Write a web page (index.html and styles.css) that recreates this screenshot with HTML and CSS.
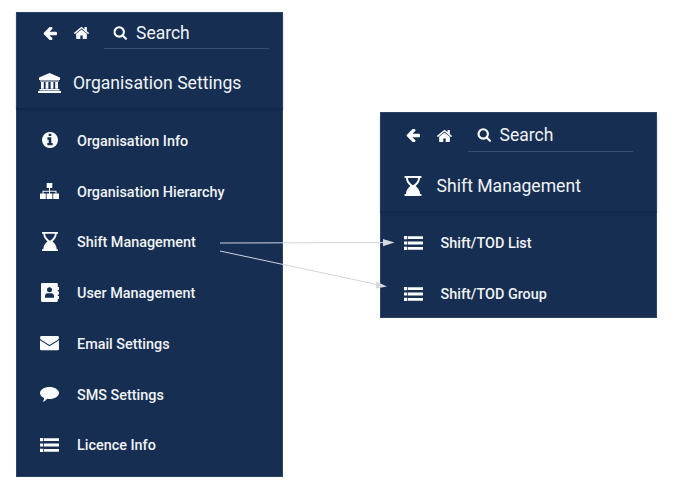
FILE: index.html
```html
<!DOCTYPE html>
<html lang="en">
<head>
<meta charset="utf-8">
<title>Organisation Settings</title>
<link rel="stylesheet" href="styles.css">
</head>
<body>
<svg class="defs" aria-hidden="true">
  <symbol id="i-back" viewBox="128 256 1536 1408"><path d="M1664 896v128q0 53-32.500 90.500t-84.500 37.500h-704l293 294q38 36 38 90t-38 90l-75 76q-37 37-90 37-52 0-91-37l-651-652q-37-37-37-90 0-52 37-91l651-650q38-38 91-38 52 0 90 38l75 74q38 38 38 91t-38 91l-293 293h704q52 0 84.500 37.500t32.500 90.500z"/></symbol>
  <symbol id="i-home" viewBox="90 256 1612 1280"><path d="M1472 992v480q0 26-19 45t-45 19h-384v-384h-256v384h-384q-26 0-45-19t-19-45v-480q0-1 .5-3t.5-3l575-474 575 474q1 2 1 6zm223-69l-62 74q-8 9-21 11h-3q-13 0-21-7l-692-577-692 577q-12 8-24 7-13-2-21-11l-62-74q-8-10-7-23.500t11-21.500l719-599q32-26 76-26t76 26l244 204v-195q0-14 9-23t23-9h192q14 0 23 9t9 23v408l219 182q10 8 11 21.500t-7 23.500z"/></symbol>
  <symbol id="i-search" viewBox="0 128 1728 1664"><path d="M1216 832q0-185-131.500-316.500t-316.500-131.500-316.500 131.500-131.500 316.500 131.500 316.500 316.500 131.500 316.500-131.500 131.500-316.500zm512 832q0 52-38 90t-90 38q-54 0-90-38l-343-342q-179 124-399 124-143 0-273.500-55.500t-225-150-150-225-55.500-273.500 55.500-273.500 150-225 225-150 273.500-55.500 273.500 55.500 225 150 150 225 55.500 273.500q0 220-124 399l343 343q37 37 37 90z"/></symbol>
  <symbol id="i-info" viewBox="128 128 1536 1536"><path d="M1152 1376v-160q0-14-9-23t-23-9h-96v-512q0-14-9-23t-23-9h-320q-14 0-23 9t-9 23v160q0 14 9 23t23 9h96v320h-96q-14 0-23 9t-9 23v160q0 14 9 23t23 9h448q14 0 23-9t9-23zm-128-896v-160q0-14-9-23t-23-9h-192q-14 0-23 9t-9 23v160q0 14 9 23t23 9h192q14 0 23-9t9-23zm640 416q0 209-103 385.500t-279.500 279.500-385.500 103-385.500-103-279.500-279.500-103-385.500 103-385.500 279.500-279.500 385.500-103 385.500 103 279.500 279.500 103 385.500z"/></symbol>
  <symbol id="i-bank" viewBox="0 0 23 20"><path d="M11.500 0 22 4.500V7H1V4.500zM2 7.600h19v1H2zM3 9h2.800v6.800H3zM7.600 9h2.800v6.800H7.600zM12.600 9h2.800v6.800h-2.800zM17.200 9H20v6.800h-2.800zM1.500 16h20v1.500h-20zM0 18h23v2H0z"/></symbol>
  <symbol id="i-tree" viewBox="0 0 19 16"><path d="M6.700 0h5.600v5H6.700zM9 5h1v2.800h6.500V11h-1V8.800H10V11H9V8.800H3.500V11h-1V7.800H9zM0 10.500h5.800V16H0zM6.600 10.500h5.800V16H6.600zM13.200 10.500H19V16h-5.800z"/></symbol>
  <symbol id="i-glass" viewBox="0 0 16 19"><path fill-rule="evenodd" d="M0 0h16v1.800h-1.300c0 3.500-2.200 6-4.200 7.700 2 1.500 4.200 4 4.200 7.700H16V19H0v-1.800h1.300c0-3.700 2.200-6.200 4.200-7.700C3.500 7.800 1.300 5.300 1.300 1.800H0zM3.100 1.800c.1 3 2.500 5.500 4.900 7 2.400-1.500 4.800-4 4.900-7z"/></symbol>
  <symbol id="i-book" viewBox="0 0 18 19"><path fill-rule="evenodd" d="M1.200 0h14.400c.7 0 1.200.5 1.200 1.200V4H18v3h-1.200v1.500H18v3h-1.200V13H18v3h-1.200v1.800c0 .7-.5 1.200-1.200 1.200H1.200C.5 19 0 18.500 0 17.800V1.200C0 .5.500 0 1.200 0zM8.500 4.200a2.500 2.500 0 1 0 0 5 2.500 2.500 0 0 0 0-5zM4 14.800h9V13c0-1.500-1-2.800-2.500-2.800h-4C5 10.200 4 11.500 4 13z"/></symbol>
  <symbol id="i-mail" viewBox="0 0 19 14.500"><path d="M1.500 0h16c.8 0 1.500.7 1.500 1.500 0 1-.6 1.800-1.400 2.400L9.500 9 1.400 3.900C.6 3.300 0 2.500 0 1.500 0 .7.700 0 1.500 0zM0 4.300l9.500 6 9.500-6V13c0 .8-.7 1.500-1.500 1.500h-16C.7 14.500 0 13.800 0 13z"/></symbol>
  <symbol id="i-chat" viewBox="0 0 19 15"><path d="M9.500 0C14.700 0 19 2.700 19 6s-4.300 6-9.500 6c-.8 0-1.500 0-2.200-.2C6 13.400 4.300 14.600 2.500 15c.8-1 1.500-2.200 1.600-4C1.600 10 0 8.100 0 6 0 2.700 4.300 0 9.500 0z"/></symbol>
  <symbol id="i-list" viewBox="0 0 19 14"><path d="M0 0h3.300v3.200H0zM4 .2h15v2.800H4zM0 5.400h3.300v3.200H0zM4 5.600h15v2.800H4zM0 10.800h3.300V14H0zM4 11h15v2.800H4z"/></symbol>
</svg>

<main class="canvas">
  <nav class="panel panel-main">
    <header class="head">
      <div class="top">
        <svg class="ic ic-back"><use href="#i-back"/></svg>
        <svg class="ic ic-home"><use href="#i-home"/></svg>
        <div class="search">
          <svg class="ic ic-search"><use href="#i-search"/></svg>
          <span>Search</span>
        </div>
      </div>
      <div class="title">
        <span class="title-icon"><svg class="ic ic-bank"><use href="#i-bank"/></svg></span>
        <span>Organisation Settings</span>
      </div>
    </header>
    <ul class="menu">
      <li class="item"><span class="item-icon"><svg class="ic ic-info"><use href="#i-info"/></svg></span><span class="label">Organisation Info</span></li>
      <li class="item"><span class="item-icon"><svg class="ic ic-tree"><use href="#i-tree"/></svg></span><span class="label">Organisation Hierarchy</span></li>
      <li class="item"><span class="item-icon"><svg class="ic ic-glass"><use href="#i-glass"/></svg></span><span class="label">Shift Management</span></li>
      <li class="item"><span class="item-icon"><svg class="ic ic-book"><use href="#i-book"/></svg></span><span class="label">User Management</span></li>
      <li class="item"><span class="item-icon"><svg class="ic ic-mail"><use href="#i-mail"/></svg></span><span class="label">Email Settings</span></li>
      <li class="item"><span class="item-icon"><svg class="ic ic-chat"><use href="#i-chat"/></svg></span><span class="label">SMS Settings</span></li>
      <li class="item"><span class="item-icon"><svg class="ic ic-list"><use href="#i-list"/></svg></span><span class="label">Licence Info</span></li>
    </ul>
  </nav>

  <nav class="panel panel-sub">
    <header class="head">
      <div class="top">
        <svg class="ic ic-back"><use href="#i-back"/></svg>
        <svg class="ic ic-home"><use href="#i-home"/></svg>
        <div class="search">
          <svg class="ic ic-search"><use href="#i-search"/></svg>
          <span>Search</span>
        </div>
      </div>
      <div class="title">
        <span class="title-icon"><svg class="ic ic-glass-lg"><use href="#i-glass"/></svg></span>
        <span>Shift Management</span>
      </div>
    </header>
    <ul class="menu">
      <li class="item"><span class="item-icon"><svg class="ic ic-list"><use href="#i-list"/></svg></span><span class="label">Shift/TOD List</span></li>
      <li class="item"><span class="item-icon"><svg class="ic ic-list"><use href="#i-list"/></svg></span><span class="label">Shift/TOD Group</span></li>
    </ul>
  </nav>

  <svg class="arrows" viewBox="0 0 676 494" aria-hidden="true">
    <line class="arrow-line" x1="220" y1="243" x2="384" y2="242.600"/>
    <polygon class="arrow-head" points="394.500,242.600 383,239 383,246.200"/>
    <line class="arrow-line" x1="220" y1="251" x2="377" y2="284.500"/>
    <polygon class="arrow-head" points="387,286.500 376,281.500 376,288.500"/>
  </svg>
</main>
</body>
</html>
```
FILE: styles.css
```css
* { box-sizing: border-box; }

html, body {
  margin: 0;
  padding: 0;
  background: #fff;
}

.defs {
  position: absolute;
  width: 0;
  height: 0;
}

.canvas {
  position: relative;
  display: flex;
  align-items: flex-start;
  gap: 96.600px;
  width: 676px;
  height: 494px;
  padding: 12px 0 0 16px;
  font-family: Roboto, "Liberation Sans", sans-serif;
  color: #f1f3f6;
  overflow: hidden;
}

.panel {
  background: #152e52;
  box-shadow: inset 0 0 0 1px #2b4365;
}

.panel-main {
  width: 267px;
  height: 465px;
}

.panel-sub {
  width: 277.400px;
  height: 205.500px;
  margin-top: 100px;
  padding-top: 3px;
}

.head {
  height: 97px;
  border-bottom: 1px solid #12284a;
  box-shadow: 0 1px 2px rgba(10, 24, 46, 0.25);
}

.top {
  display: flex;
  align-items: center;
  height: 37px;
  padding: 5px 14px 0 27px;
}

.panel-sub .top {
  padding: 4px 24px 0 26.400px;
}

.panel-sub .search {
  margin-left: 15.600px;
}

.panel-sub .label {
  padding-top: 0;
}

.ic {
  display: block;
  fill: #fbfcfd;
  flex: none;
}

.ic-back { width: 14px; height: 13px; }
.ic-home { width: 15px; height: 12px; margin-left: 17px; }

.search {
  display: flex;
  align-items: center;
  flex: 1;
  height: 100%;
  margin-left: 15px;
  padding-left: 9px;
  border-bottom: 1px solid #3a5072;
  font-size: 17.500px;
}

.ic-search { width: 14px; height: 14px; margin-right: 9px; }

.title {
  display: flex;
  align-items: center;
  height: 60px;
  padding: 7px 0 0 21px;
  font-size: 17.600px;
}

.title-icon {
  display: flex;
  justify-content: center;
  width: 24px;
  margin-right: 12px;
}

.ic-bank { width: 23px; height: 20px; }
.ic-glass-lg { width: 18px; height: 20px; }

.menu {
  list-style: none;
  margin: 0;
  padding: 6px 0 0;
}

.item {
  display: flex;
  align-items: center;
  height: 50.750px;
  padding-left: 24px;
  font-size: 14.400px;
  font-weight: 500;
}

.item-icon {
  display: flex;
  justify-content: center;
  width: 19px;
  margin-right: 18px;
}

.label {
  padding-top: 2px;
}

.ic-info { width: 16px; height: 16px; }
.ic-tree { width: 19px; height: 16px; }
.ic-glass { width: 16px; height: 19px; }
.ic-book { width: 18px; height: 19px; }
.ic-mail { width: 19px; height: 14.500px; }
.ic-chat { width: 19px; height: 15px; }
.ic-list { width: 19px; height: 14px; }

.arrows {
  position: absolute;
  left: 0;
  top: 0;
  width: 676px;
  height: 494px;
  pointer-events: none;
}

.arrow-line {
  stroke: #d2d4d8;
  stroke-width: 1;
}

.arrow-head {
  fill: #d6d8db;
}
```
